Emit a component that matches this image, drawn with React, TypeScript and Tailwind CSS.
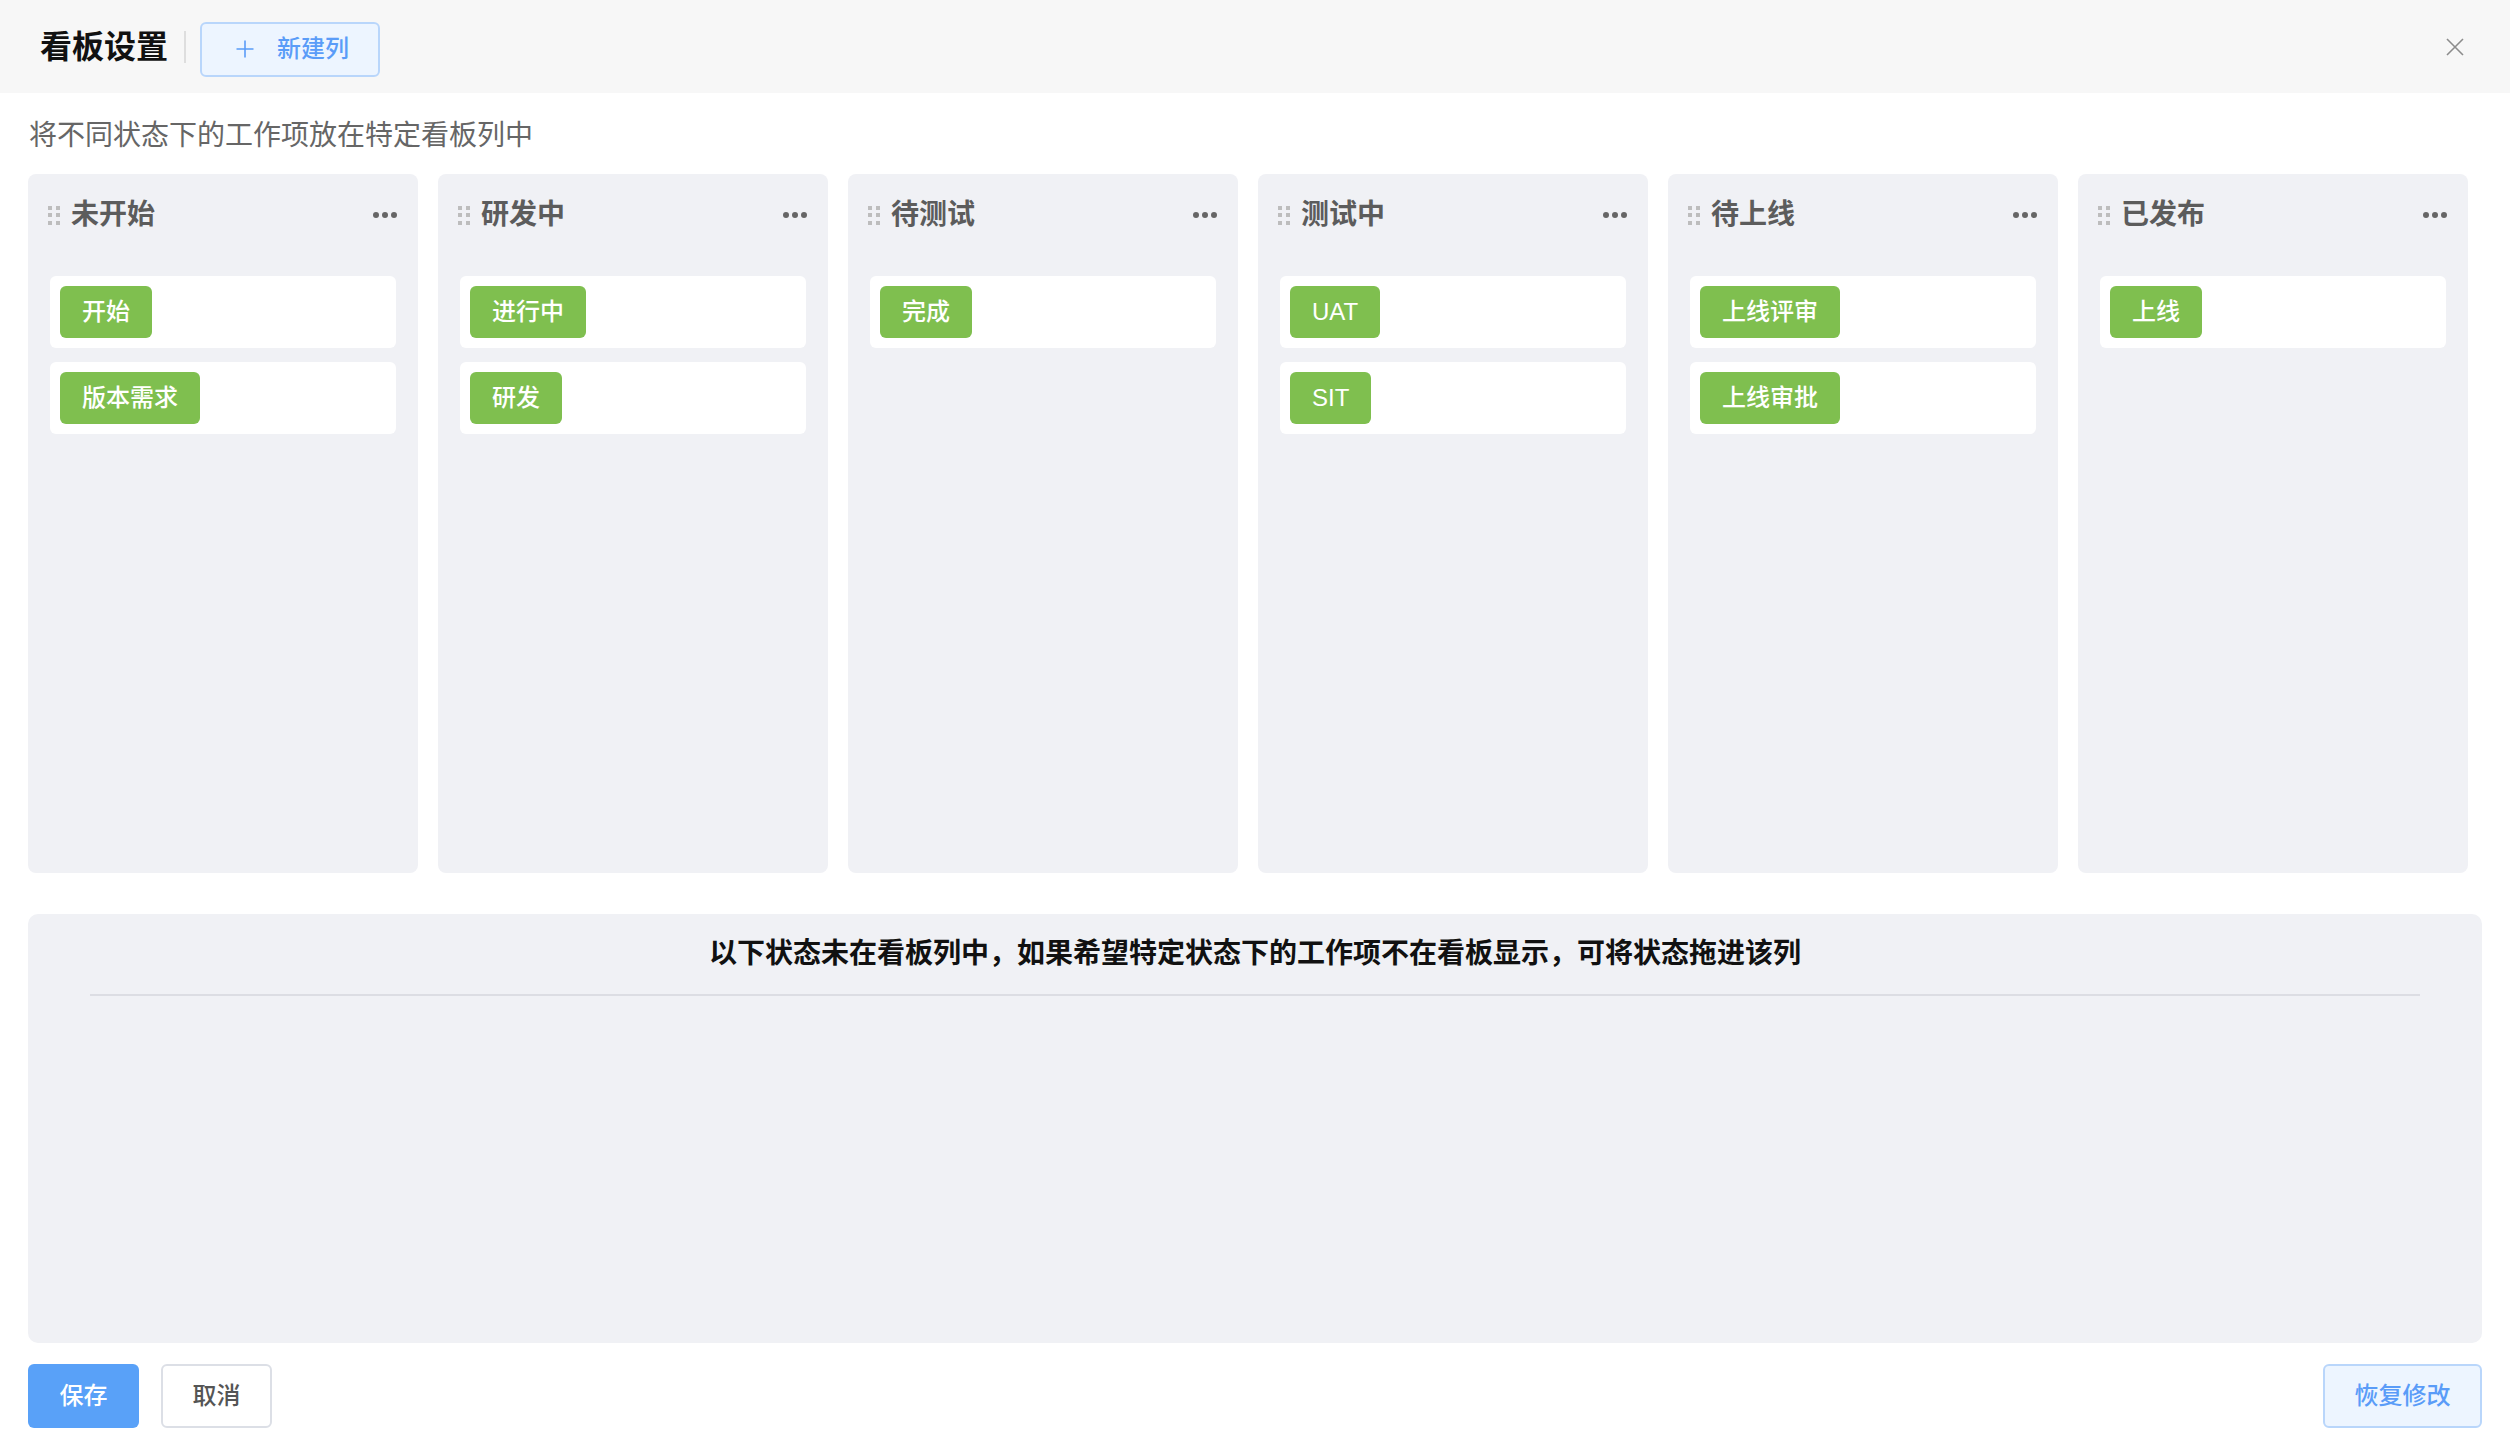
import React from "react";

interface Column {
  title: string;
  states: string[];
}

const columns: Column[] = [
  { title: "未开始", states: ["开始", "版本需求"] },
  { title: "研发中", states: ["进行中", "研发"] },
  { title: "待测试", states: ["完成"] },
  { title: "测试中", states: ["UAT", "SIT"] },
  { title: "待上线", states: ["上线评审", "上线审批"] },
  { title: "已发布", states: ["上线"] },
];

const DragHandle = () => (
  <div className="grid grid-cols-2 gap-x-[4px] gap-y-[3.5px]">
    {Array.from({ length: 6 }).map((_, i) => (
      <span key={i} className="block w-[4px] h-[4px] bg-[#bdbdbd]" />
    ))}
  </div>
);

const MoreDots = () => (
  <div className="flex items-center gap-[3px]">
    <span className="block w-[6px] h-[6px] rounded-full bg-[#666]" />
    <span className="block w-[6px] h-[6px] rounded-full bg-[#666]" />
    <span className="block w-[6px] h-[6px] rounded-full bg-[#666]" />
  </div>
);

const BoardColumn = ({ column }: { column: Column }) => (
  <div className="w-[390px] h-full shrink-0 bg-[#f0f1f5] rounded-[8px] px-[22px]">
    <div className="mt-[17px] h-[48px] flex items-center">
      <div className="-ml-[2px]">
        <DragHandle />
      </div>
      <span className="ml-[11px] text-[28px] leading-none font-semibold text-[#5c5c5c]">
        {column.title}
      </span>
      <div className="ml-auto mr-[-1px]">
        <MoreDots />
      </div>
    </div>
    <div className="mt-[37px] flex flex-col gap-[14px]">
      {column.states.map((s) => (
        <div
          key={s}
          className="h-[72px] bg-white rounded-[6px] p-[10px] flex items-start"
        >
          <span className="h-[52px] px-[22px] rounded-[6px] bg-[#7fbf4f] text-white text-[24px] leading-[52px] font-medium">
            {s}
          </span>
        </div>
      ))}
    </div>
  </div>
);

const App = () => {
  return (
    <div className="w-[2510px] h-[1448px] bg-white flex flex-col font-['Liberation_Sans','Noto_Sans_CJK_SC',sans-serif]">
      <div className="h-[93px] shrink-0 bg-[#f7f7f7] flex items-center pl-[40px] pr-[46px]">
        <h1 className="text-[32px] leading-none font-bold text-[#111]">
          看板设置
        </h1>
        <div className="ml-[16px] w-[2px] h-[32px] bg-[#dedede]" />
        <button className="ml-[14px] mt-[5px] w-[180px] h-[55px] border-2 border-[#b9d6fb] bg-[#edf5ff] rounded-[6px] flex items-center pl-[33px]">
          <svg width="20" height="20" viewBox="0 0 20 20" fill="none">
            <path
              d="M10 1.5v17M1.5 10h17"
              stroke="#5a9cf8"
              strokeWidth="1.6"
            />
          </svg>
          <span className="ml-[22px] text-[24px] leading-none font-medium text-[#5a9cf8]">
            新建列
          </span>
        </button>
        <button className="ml-auto">
          <svg width="18" height="18" viewBox="0 0 18 18" fill="none">
            <path d="M1 1l16 16M17 1L1 17" stroke="#8c8c8c" strokeWidth="1.6" />
          </svg>
        </button>
      </div>

      <p className="mt-[23px] h-[40px] leading-[40px] pl-[29px] text-[28px] text-[#666]">
        将不同状态下的工作项放在特定看板列中
      </p>

      <div className="mt-[18px] h-[699px] flex gap-[20px] pl-[28px]">
        {columns.map((c) => (
          <BoardColumn key={c.title} column={c} />
        ))}
      </div>

      <div className="mt-[41px] mx-[28px] h-[429px] bg-[#f0f1f5] rounded-[10px] flex flex-col">
        <h2 className="pt-[20px] h-[60px] leading-[40px] text-center text-[28px] font-bold text-[#111]">
          以下状态未在看板列中，如果希望特定状态下的工作项不在看板显示，可将状态拖进该列
        </h2>
        <div className="mt-[20px] mx-[62px] h-[2px] bg-[#dcdde3]" />
      </div>

      <div className="mt-[21px] px-[28px] flex items-center">
        <button className="w-[111px] h-[64px] rounded-[6px] bg-[#59a1f8] text-white text-[24px] font-medium">
          保存
        </button>
        <button className="ml-[22px] w-[111px] h-[64px] rounded-[6px] border-2 border-[#dcdfe6] bg-white text-[#555] text-[24px] font-medium">
          取消
        </button>
        <button className="ml-auto w-[159px] h-[64px] rounded-[6px] border-2 border-[#b9d6fb] bg-[#edf5ff] text-[#5a9cf8] text-[24px] font-medium">
          恢复修改
        </button>
      </div>
    </div>
  );
};

export default App;
